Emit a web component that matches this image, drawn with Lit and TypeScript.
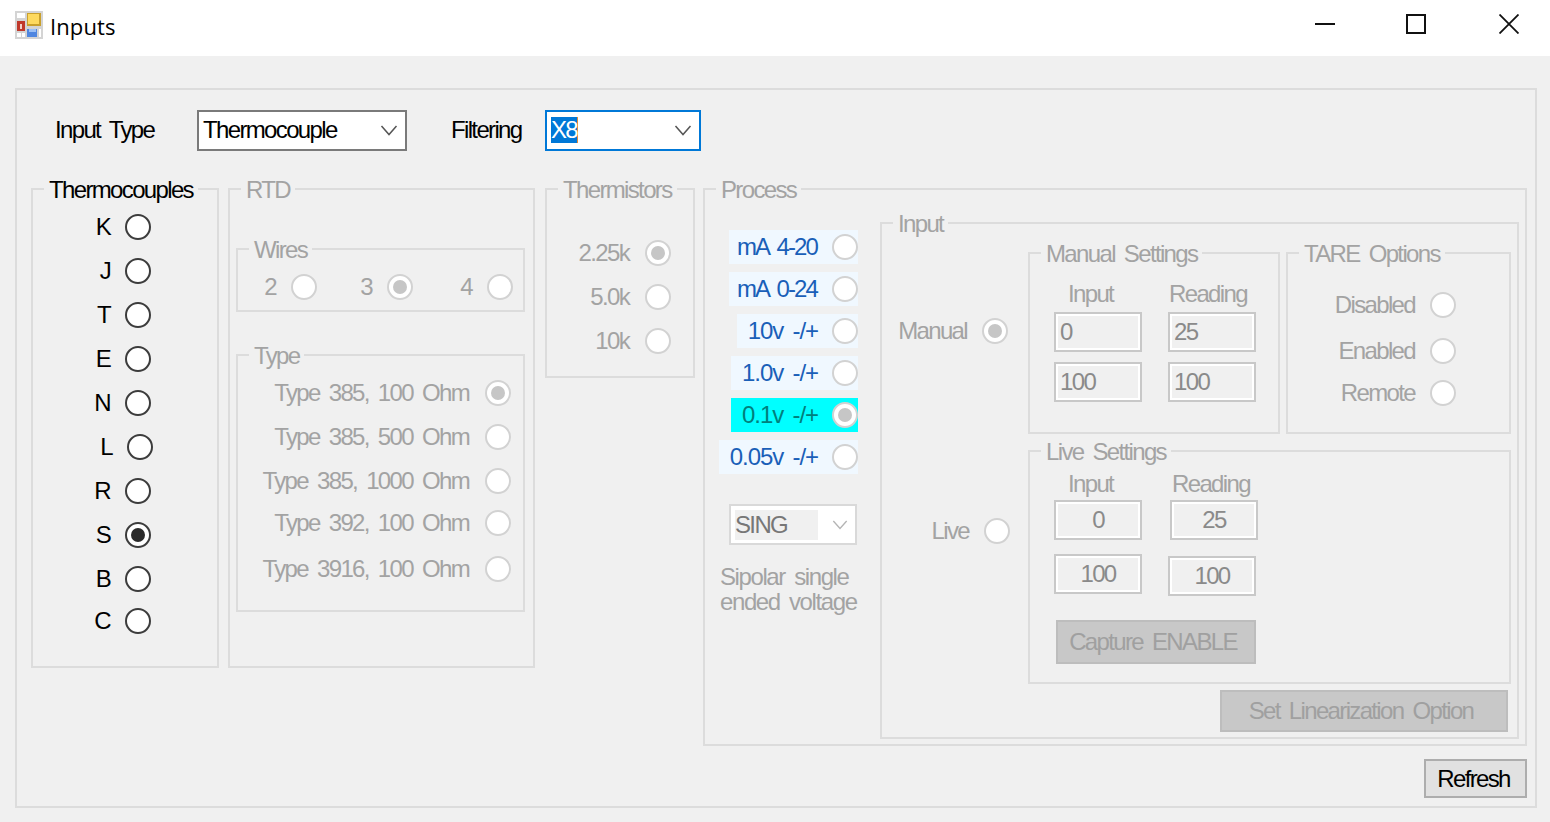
import { LitElement, html, css } from "lit";
import { customElement } from "lit/decorators.js";

const couples = ["K", "J", "T", "E", "N", "L", "R", "S", "B", "C"];
const rtdTypes = [
  "Type 385, 100 Ohm",
  "Type 385, 500 Ohm",
  "Type 385, 1000 Ohm",
  "Type 392, 100 Ohm",
  "Type 3916, 100 Ohm",
];
const ranges = [
  { label: "mA 4-20", width: 129 },
  { label: "mA 0-24", width: 129 },
  { label: "10v -/+", width: 121, volt: true },
  { label: "1.0v -/+", width: 127, volt: true },
  { label: "0.1v -/+", width: 127, volt: true, active: true },
  { label: "0.05v -/+", width: 139, volt: true },
];

const chevron = html`<svg class="chevron" width="18" height="11" viewBox="0 0 18 11">
  <polyline points="1.5,1 9,9.5 16.5,1" fill="none" stroke="currentColor" stroke-width="1.5"></polyline>
</svg>`;

@customElement("app-root")
export class AppRoot extends LitElement {
  static styles = css`
    :host {
      display: block;
      width: 1550px;
      height: 822px;
      overflow: hidden;
      background: #f0f0f0;
      font-family: "Liberation Sans", Arial, sans-serif;
      font-size: 24px;
      letter-spacing: -1.65px;
      word-spacing: 4px;
      color: #000;
    }
    * {
      box-sizing: border-box;
    }
    .titlebar {
      height: 56px;
      background: #fff;
      display: flex;
      align-items: center;
      padding: 0 31px 0 15px;
    }
    .title {
      margin: 0 0 4px 7px;
      font-family: "Open Sans", sans-serif;
      font-size: 22px;
      letter-spacing: 0.1px;
      word-spacing: 0;
      flex: 1;
    }
    .app-icon {
      margin-bottom: 6px;
    }
    .controls {
      display: flex;
      margin-bottom: 8px;
    }
    .controls svg + svg {
      margin-left: 71px;
    }
    .controls svg:last-child {
      margin-left: 73px;
    }
    .outer {
      margin: 32px 13px 0 15px;
      height: 720px;
      border: 2px solid #dcdcdc;
      padding: 20px 8px 0 14px;
      display: flex;
      flex-direction: column;
    }
    .top {
      display: flex;
      align-items: center;
      height: 41px;
      padding-left: 24px;
    }
    .top-label {
      width: 142px;
      margin-bottom: 2px;
    }
    .top-label.filter {
      width: 94px;
      margin-left: 44px;
    }
    .select {
      height: 41px;
      background: #fff;
      border: 2px solid #7a7a7a;
      display: flex;
      align-items: center;
      justify-content: space-between;
      padding: 0 7px 0 4px;
      color: #000;
    }
    .select span {
      margin-bottom: 2px;
    }
    .select .chevron {
      color: #555;
    }
    .select.type {
      width: 210px;
    }
    .select.filter {
      width: 156px;
      border-color: #0078d7;
    }
    .selected {
      background: #0078d7;
      color: #fff;
      height: 26px;
      line-height: 26px;
      width: 27px;
      border-right: 1px solid #e08a3c;
    }
    .groups {
      display: flex;
      align-items: flex-start;
      margin-top: 37px;
    }
    .group {
      position: relative;
      border: 2px solid #dcdcdc;
    }
    .legend {
      position: absolute;
      left: 11px;
      top: -12px;
      height: 24px;
      line-height: 24px;
      padding: 0 5px;
      background: #f0f0f0;
      white-space: nowrap;
      color: #a3a3a3;
    }
    .legend.on {
      color: #000;
    }
    .couples {
      width: 188px;
      height: 480px;
      padding: 15px 66px 0 0;
      display: grid;
      grid-template-rows: repeat(9, 44px) 40px;
      align-content: start;
    }
    .rtd {
      width: 307px;
      height: 480px;
      margin-left: 9px;
      padding: 58px 8px 0 6px;
    }
    .wires {
      height: 64px;
      display: grid;
      grid-template-columns: 80px 96px 100px;
      justify-content: end;
      align-items: center;
      padding: 14px 10px 0 0;
    }
    .types {
      height: 258px;
      margin-top: 42px;
      padding: 15px 12px 0 0;
      display: grid;
      grid-template-rows: 44px 44px 44px 40px 52px;
      align-content: start;
    }
    .types .row {
      gap: 16px;
    }
    .thermistors {
      width: 150px;
      height: 190px;
      margin-left: 10px;
      padding: 41px 22px 0 0;
      display: grid;
      grid-auto-rows: 44px;
    }
    .thermistors .row {
      gap: 16px;
    }
    .process {
      width: 824px;
      height: 558px;
      margin-left: 8px;
      padding: 32px 6px 5px 0;
      display: flex;
      gap: 22px;
    }
    .row {
      display: flex;
      align-items: center;
      justify-content: flex-end;
      gap: 15px;
      white-space: nowrap;
      color: #a3a3a3;
    }
    .couples .row {
      color: #000;
    }
    .radio {
      width: 26px;
      height: 26px;
      flex: none;
      border-radius: 50%;
      border: 2px solid #d2d2d2;
      background: #fff;
      display: flex;
      align-items: center;
      justify-content: center;
    }
    .radio.on::after {
      content: "";
      width: 14px;
      height: 14px;
      border-radius: 50%;
      background: #c6c6c6;
    }
    .couples .radio {
      border-color: #3c3c3c;
    }
    .couples .radio.on::after {
      background: #2a2a2a;
    }
    .nudge {
      margin-right: -2px;
    }
    .ranges {
      width: 153px;
      flex: none;
      padding-top: 8px;
      display: flex;
      flex-direction: column;
      align-items: flex-end;
    }
    .range {
      height: 34px;
      margin-bottom: 8px;
      background: #f0f8ff;
      color: #1a5fb8;
      letter-spacing: -1.9px;
    }
    .range.volt {
      gap: 14px;
      letter-spacing: -1.1px;
    }
    .range.active {
      background: #00ffff;
      color: #00807c;
    }
    .sing {
      width: 128px;
      height: 41px;
      margin: 22px 1px 0 0;
      background: #fff;
      border: 2px solid #d9d9d9;
      display: flex;
      align-items: center;
      justify-content: space-between;
      padding: 0 7px 0 4px;
      color: #b4b4b4;
    }
    .sing .chevron {
      width: 16px;
      height: 10px;
    }
    .sing-value {
      width: 83px;
      height: 30px;
      line-height: 30px;
      background: #f0f0f0;
      color: #777;
    }
    .note {
      align-self: flex-start;
      margin: 19px 0 0 15px;
      line-height: 25px;
      letter-spacing: -1.4px;
      white-space: nowrap;
      color: #a3a3a3;
    }
    .input-group {
      flex: 1;
      padding: 28px 6px 0 0;
      display: grid;
      grid-template-columns: 146px 1fr;
      grid-template-rows: 182px 234px auto;
      row-gap: 16px;
      align-content: start;
    }
    .mode {
      height: 34px;
    }
    .mode.manual {
      margin: 62px 20px 0 0;
    }
    .mode.live {
      margin: 64px 18px 0 0;
    }
    .settings-pair {
      display: flex;
      justify-content: space-between;
    }
    .manual-set {
      width: 252px;
      height: 182px;
      padding: 28px 0 0 24px;
      display: grid;
      grid-template-columns: 88px 88px;
      grid-template-rows: 20px 40px 40px;
      column-gap: 26px;
      row-gap: 10px;
      align-content: start;
    }
    .tare {
      width: 225px;
      height: 182px;
      padding: 28px 53px 0 0;
      display: grid;
      grid-template-rows: 46px 46px 38px;
      align-content: start;
    }
    .head {
      height: 24px;
      line-height: 24px;
      color: #a3a3a3;
      white-space: nowrap;
    }
    .head.input {
      padding-left: 14px;
    }
    .head.reading {
      padding-left: 1px;
    }
    .head.reading.wide {
      padding-left: 4px;
    }
    .box {
      width: 88px;
      height: 40px;
      border: 2px solid #c8c8c8;
      box-shadow: inset 0 0 0 2px #fff;
      background: #f0f0f0;
      display: flex;
      align-items: center;
      padding-left: 4px;
      color: #8a8a8a;
    }
    .box.center {
      justify-content: center;
      padding-left: 0;
    }
    .box.shift {
      margin-left: 2px;
    }
    .box.lower {
      margin-top: 2px;
    }
    .live-set {
      height: 234px;
      padding: 20px 0 0 24px;
    }
    .live-grid {
      display: grid;
      grid-template-columns: 88px 88px;
      column-gap: 26px;
      row-gap: 14px;
      align-items: start;
    }
    .live-grid .head {
      margin-bottom: -10px;
    }
    .btn {
      background: #c8c8c8;
      border: 2px solid #bdbdbd;
      color: #a0a0a0;
      display: flex;
      align-items: center;
      justify-content: center;
      white-space: nowrap;
    }
    .btn.capture {
      width: 200px;
      height: 44px;
      margin: 24px 0 0 2px;
      padding-right: 6px;
    }
    .btn.linear {
      grid-column: 2;
      justify-self: end;
      width: 288px;
      height: 42px;
      margin: -10px 3px 0 0;
      padding-right: 6px;
    }
    .btn.refresh {
      align-self: flex-end;
      width: 103px;
      height: 39px;
      margin-top: 13px;
      padding-right: 4px;
      background: #e1e1e1;
      border-color: #adadad;
      color: #000;
    }
  `;

  private radioRow(label: string, on = false, nudge = false) {
    return html`<div class="row">
      <span>${label}</span>
      <span class="radio ${on ? "on" : ""} ${nudge ? "nudge" : ""}"></span>
    </div>`;
  }

  private group(title: string, cls: string, body: unknown, active = false) {
    return html`<div class="group ${cls}">
      <span class="legend ${active ? "on" : ""}">${title}</span>
      ${body}
    </div>`;
  }

  render() {
    return html`
      <div class="titlebar">
        <svg class="app-icon" width="28" height="28" viewBox="0 0 28 28">
          <rect width="28" height="28" fill="#d4d4d4"></rect>
          <rect x="2" y="2" width="8" height="5" fill="#fff"></rect>
          <rect x="2" y="10" width="8" height="10" fill="#c0392b"></rect>
          <rect x="5" y="13" width="2" height="5" fill="#f2d0c8"></rect>
          <rect x="2" y="22" width="4" height="4" fill="#fff"></rect>
          <rect x="7" y="22" width="3" height="4" fill="#fff"></rect>
          <rect x="12" y="2" width="14" height="13" fill="#c9a02c"></rect>
          <rect x="13" y="3" width="11" height="10" fill="#fdd95f"></rect>
          <rect x="12" y="18" width="10" height="8" fill="#4f86e0"></rect>
          <rect x="14" y="18" width="7" height="3" fill="#9cc0f5"></rect>
          <rect x="24" y="18" width="2" height="8" fill="#fff"></rect>
        </svg>
        <span class="title">Inputs</span>
        <div class="controls">
          <svg width="20" height="20" viewBox="0 0 20 20">
            <rect y="9" width="20" height="2" fill="#111"></rect>
          </svg>
          <svg width="20" height="20" viewBox="0 0 20 20">
            <rect x="1" y="1" width="18" height="18" fill="none" stroke="#111" stroke-width="2"></rect>
          </svg>
          <svg width="20" height="20" viewBox="0 0 20 20">
            <path d="M0.5 0.5 L19.5 19.5 M19.5 0.5 L0.5 19.5" stroke="#111" stroke-width="1.8"></path>
          </svg>
        </div>
      </div>
      <div class="outer">
        <div class="top">
          <span class="top-label">Input Type</span>
          <div class="select type"><span>Thermocouple</span>${chevron}</div>
          <span class="top-label filter">Filtering</span>
          <div class="select filter"><span class="selected">X8</span>${chevron}</div>
        </div>
        <div class="groups">
          ${this.group(
            "Thermocouples",
            "couples",
            couples.map((c) => this.radioRow(c, c === "S", c === "L")),
            true
          )}
          ${this.group(
            "RTD",
            "rtd",
            html`
              ${this.group(
                "Wires",
                "wires",
                html`${this.radioRow("2")}${this.radioRow("3", true)}${this.radioRow("4")}`
              )}
              ${this.group(
                "Type",
                "types",
                rtdTypes.map((t, i) => this.radioRow(t, i === 0))
              )}
            `
          )}
          ${this.group(
            "Thermistors",
            "thermistors",
            html`${this.radioRow("2.25k", true)}${this.radioRow("5.0k")}${this.radioRow("10k")}`
          )}
          ${this.group(
            "Process",
            "process",
            html`
              <div class="ranges">
                ${ranges.map(
                  (r) => html`<div
                    class="row range ${r.active ? "active" : ""} ${r.volt ? "volt" : ""}"
                    style="width:${r.width}px"
                  >
                    <span>${r.label}</span>
                    <span class="radio ${r.active ? "on" : ""}"></span>
                  </div>`
                )}
                <div class="sing"><span class="sing-value">SING</span>${chevron}</div>
                <div class="note">Sipolar single<br />ended voltage</div>
              </div>
              ${this.group("Input", "input-group", this.inputBody())}
            `
          )}
        </div>
        <div class="btn refresh">Refresh</div>
      </div>
    `;
  }

  private inputBody() {
    return html`
      <div class="row mode manual">
        <span>Manual</span><span class="radio on"></span>
      </div>
      <div class="settings-pair">
        ${this.group(
          "Manual Settings",
          "manual-set",
          html`
            <div class="head input">Input</div>
            <div class="head reading">Reading</div>
            <div class="box">0</div>
            <div class="box">25</div>
            <div class="box">100</div>
            <div class="box">100</div>
          `
        )}
        ${this.group(
          "TARE Options",
          "tare",
          html`${this.radioRow("Disabled")}${this.radioRow("Enabled")}${this.radioRow("Remote")}`
        )}
      </div>
      <div class="row mode live">
        <span>Live</span><span class="radio"></span>
      </div>
      ${this.group(
        "Live Settings",
        "live-set",
        html`
          <div class="live-grid">
            <div class="head input">Input</div>
            <div class="head reading wide">Reading</div>
            <div class="box center">0</div>
            <div class="box center shift">25</div>
            <div class="box center">100</div>
            <div class="box center lower">100</div>
          </div>
          <div class="btn capture">Capture ENABLE</div>
        `
      )}
      <div class="btn linear">Set Linearization Option</div>
    `;
  }
}
